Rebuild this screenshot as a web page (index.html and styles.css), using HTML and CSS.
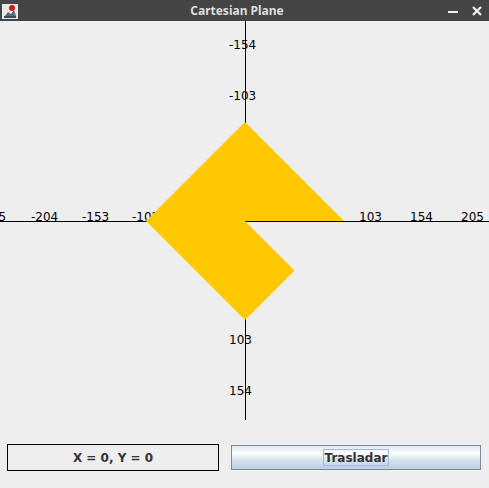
FILE: index.html
```html
<!DOCTYPE html>
<html>
<head>
<meta charset="utf-8">
<link rel="stylesheet" href="styles.css">
</head>
<body>
<div class="window">
  <div class="titlebar">
    <svg class="app-icon" width="18" height="18" viewBox="0 0 18 18">
      <rect x="1" y="2" width="16" height="15" fill="#e8e8e8"/>
      <path d="M4 14 L7 10 L10 12 L13 8 L15 14 Z" fill="#5a6b7c"/>
      <circle cx="11" cy="6" r="3" fill="#d01818"/>
      <rect x="3" y="14" width="12" height="2" fill="#3a4a5a"/>
    </svg>
    <div class="title">Cartesian Plane</div>
    <div class="controls">
      <svg width="12" height="12" viewBox="0 0 12 12"><rect x="1" y="6" width="10" height="2" fill="#f2f2f2"/></svg>
      <svg width="12" height="12" viewBox="0 0 12 12"><path d="M2 2 L10 10 M10 2 L2 10" stroke="#f2f2f2" stroke-width="2.2"/></svg>
    </div>
  </div>
  <svg class="plane" width="489" height="414" viewBox="0 21 489 414">
    <line x1="0" y1="221.5" x2="489" y2="221.5" stroke="#000" stroke-width="1"/>
    <line x1="245.5" y1="21" x2="245.5" y2="420" stroke="#000" stroke-width="1"/>
    <g class="lbl">
      <text x="-21" y="220.5">-255</text>
      <text x="31" y="220.5">-204</text>
      <text x="82" y="220.5">-153</text>
      <text x="132" y="220.5">-102</text>
      <text x="359" y="220.5">103</text>
      <text x="410" y="220.5">154</text>
      <text x="461" y="220.5">205</text>
      <text x="229" y="48.5">-154</text>
      <text x="229" y="99.5">-103</text>
      <text x="229" y="343.5">103</text>
      <text x="229" y="394.5">154</text>
    </g>
    <polygon points="245,122 344,221 245,221 294.5,270.5 245,320 146,221" fill="#ffc800"/>
  </svg>
  <div class="bottom">
    <div class="coords">X = 0, Y = 0</div>
    <button class="btn"><span class="focus">Trasladar</span></button>
  </div>
</div>
</body>
</html>
```
FILE: styles.css
```css
html, body {
  margin: 0;
  padding: 0;
  background: #eeeeee;
}
.window {
  width: 489px;
  height: 488px;
  display: flex;
  flex-direction: column;
  background: #eeeeee;
  font-family: "DejaVu Sans", sans-serif;
}
.titlebar {
  height: 21px;
  background: #454545;
  display: flex;
  align-items: center;
  position: relative;
}
.app-icon {
  margin-left: 1px;
}
.title {
  position: absolute;
  left: 0;
  right: 0;
  text-align: center;
  padding-right: 15px;
  color: #dcdcdc;
  font-family: "Noto Sans", sans-serif;
  font-weight: bold;
  font-size: 12px;
  line-height: 21px;
}
.controls {
  margin-left: auto;
  display: flex;
  gap: 12px;
  padding-right: 6px;
}
.plane {
  display: block;
}
.lbl text {
  font-family: "DejaVu Sans", sans-serif;
  font-size: 12px;
  fill: #000;
}
.bottom {
  display: flex;
  align-items: flex-start;
  padding: 9px 8px 0 7px;
  gap: 12px;
}
.coords {
  width: 210px;
  height: 25px;
  border: 1px solid #000;
  display: flex;
  align-items: center;
  justify-content: center;
  font-weight: bold;
  font-size: 12px;
  color: #333333;
}
.btn {
  margin-top: 1px;
  width: 250px;
  height: 25px;
  border: 1px solid #7a8a99;
  background: linear-gradient(to bottom, #dde8f3 0%, #ffffff 30%, #dce7f2 55%, #b8cfe5 100%);
  display: flex;
  align-items: center;
  justify-content: center;
  padding: 0;
  font-family: "DejaVu Sans", sans-serif;
  font-weight: bold;
  font-size: 12px;
  color: #333333;
}
.focus {
  border: 1px solid #a3b8cc;
  padding: 1px 1px 0 1px;
  line-height: 14px;
}
```
